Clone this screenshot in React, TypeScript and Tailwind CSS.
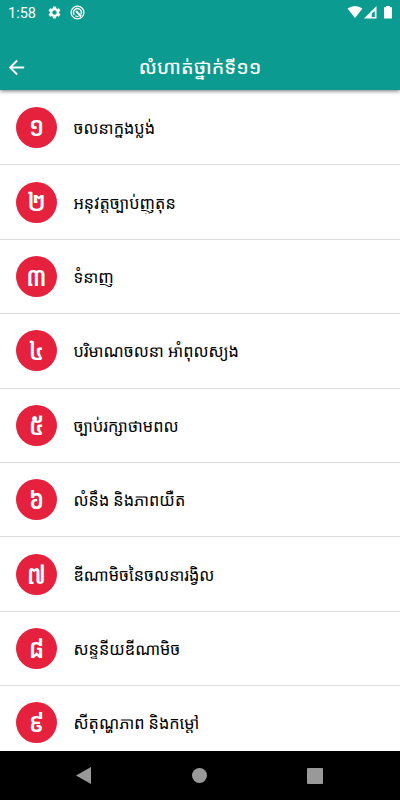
import { MdSettings, MdArrowBack } from "react-icons/md";

type Lesson = {
  number: string;
  title: string;
};

const lessons: Lesson[] = [
  { number: "១", title: "ចលនាក្នុងប្លង់" },
  { number: "២", title: "អនុវត្តច្បាប់ញូតុន" },
  { number: "៣", title: "ទំនាញ" },
  { number: "៤", title: "បរិមាណចលនា អាំពុលស្យុង" },
  { number: "៥", title: "ច្បាប់រក្សាថាមពល" },
  { number: "៦", title: "លំនឹង និងភាពយឺត" },
  { number: "៧", title: "ឌីណាមិចនៃចលនារង្វិល" },
  { number: "៨", title: "សន្ទនីយឌីណាមិច" },
  { number: "៩", title: "សីតុណ្ហភាព និងកម្តៅ" },
];

const StatusBar = () => (
  <div className="flex h-[25px] items-center justify-between pl-2 pr-[7px] text-white">
    <div className="flex items-center">
      <span className="w-[39px] pt-[3px] text-[14.5px] leading-none">1:58</span>
      <MdSettings className="size-[15px]" />
      <svg viewBox="0 0 15 15" className="ml-[8px] size-[15px]" fill="none" stroke="currentColor">
        <circle cx="7.5" cy="7.5" r="6.4" strokeWidth="1.3" />
        <path d="M4.3 9.8A3.9 3.9 0 1 1 10.8 9.5" strokeWidth="1.4" />
        <path d="M6 6l5 5.5" strokeWidth="2" />
        <path d="M5.3 10.8a4 4 0 0 0 3.2.6" strokeWidth="1.2" />
      </svg>
    </div>
    <svg viewBox="0 0 46 15" className="h-[15px] w-[46px]" fill="currentColor">
      <path d="M0.5 3.4Q8 -1.6 15.5 3.4L8 13z" />
      <path d="M29.5 1v12.5H17z" />
      <path d="M27.8 6v6h-3V8.5z" className="fill-[#0b9b90]" />
      <path d="M37 2.2h2V1h4v1.200h2v11.300h-8z" />
    </svg>
  </div>
);

const Header = () => (
  <header className="relative z-10 h-[90px] shrink-0 bg-[#0b9b90] shadow-[0_1px_4px_rgba(0,0,0,0.55)]">
    <StatusBar />
    <div className="grid h-[65px] grid-cols-[40px_1fr_40px] items-center text-white">
      <MdArrowBack className="ml-[5px] mt-[19px] size-[23px]" />
      <h1 className="mt-[20px] whitespace-nowrap text-center text-[19.4px] font-medium leading-none">
        លំហាត់ថ្នាក់ទី១១
      </h1>
    </div>
  </header>
);

// the title box is shorter than the Khmer line, so deep subscripts get cut off
const LessonRow = ({ number, title }: Lesson) => (
  <li className="flex h-[74.4px] shrink-0 items-center border-b border-[#dcdcdc] pl-4">
    <span className="flex size-[41px] items-center justify-center rounded-full bg-[#e5213d] text-[23px] font-semibold leading-none text-white">
      <span className="scale-y-120">{number}</span>
    </span>
    <span className="ml-[16.5px] mt-px h-[22px] overflow-hidden whitespace-nowrap text-[16.3px] leading-[24px] text-black">
      {title}
    </span>
  </li>
);

const NavBar = () => (
  <nav className="flex h-[49px] shrink-0 items-center justify-between bg-black pl-[76px] pr-[77px]">
    <svg viewBox="0 0 15 17" className="h-[17px] w-[15px] fill-[#999999]">
      <path d="M15 0v17L0 8.500z" />
    </svg>
    <span className="size-[15px] rounded-full bg-[#999999]" />
    <span className="size-4 rounded-[1px] bg-[#999999]" />
  </nav>
);

const App = () => {
  return (
    <div className="flex h-[800px] w-[400px] flex-col overflow-hidden bg-white font-[Roboto,'Noto_Sans_Khmer','Noto_Sans',sans-serif]">
      <Header />
      <ul className="flex min-h-0 flex-1 flex-col overflow-hidden pt-px">
        {lessons.map((lesson) => (
          <LessonRow key={lesson.number} {...lesson} />
        ))}
      </ul>
      <NavBar />
    </div>
  );
};

export default App;
